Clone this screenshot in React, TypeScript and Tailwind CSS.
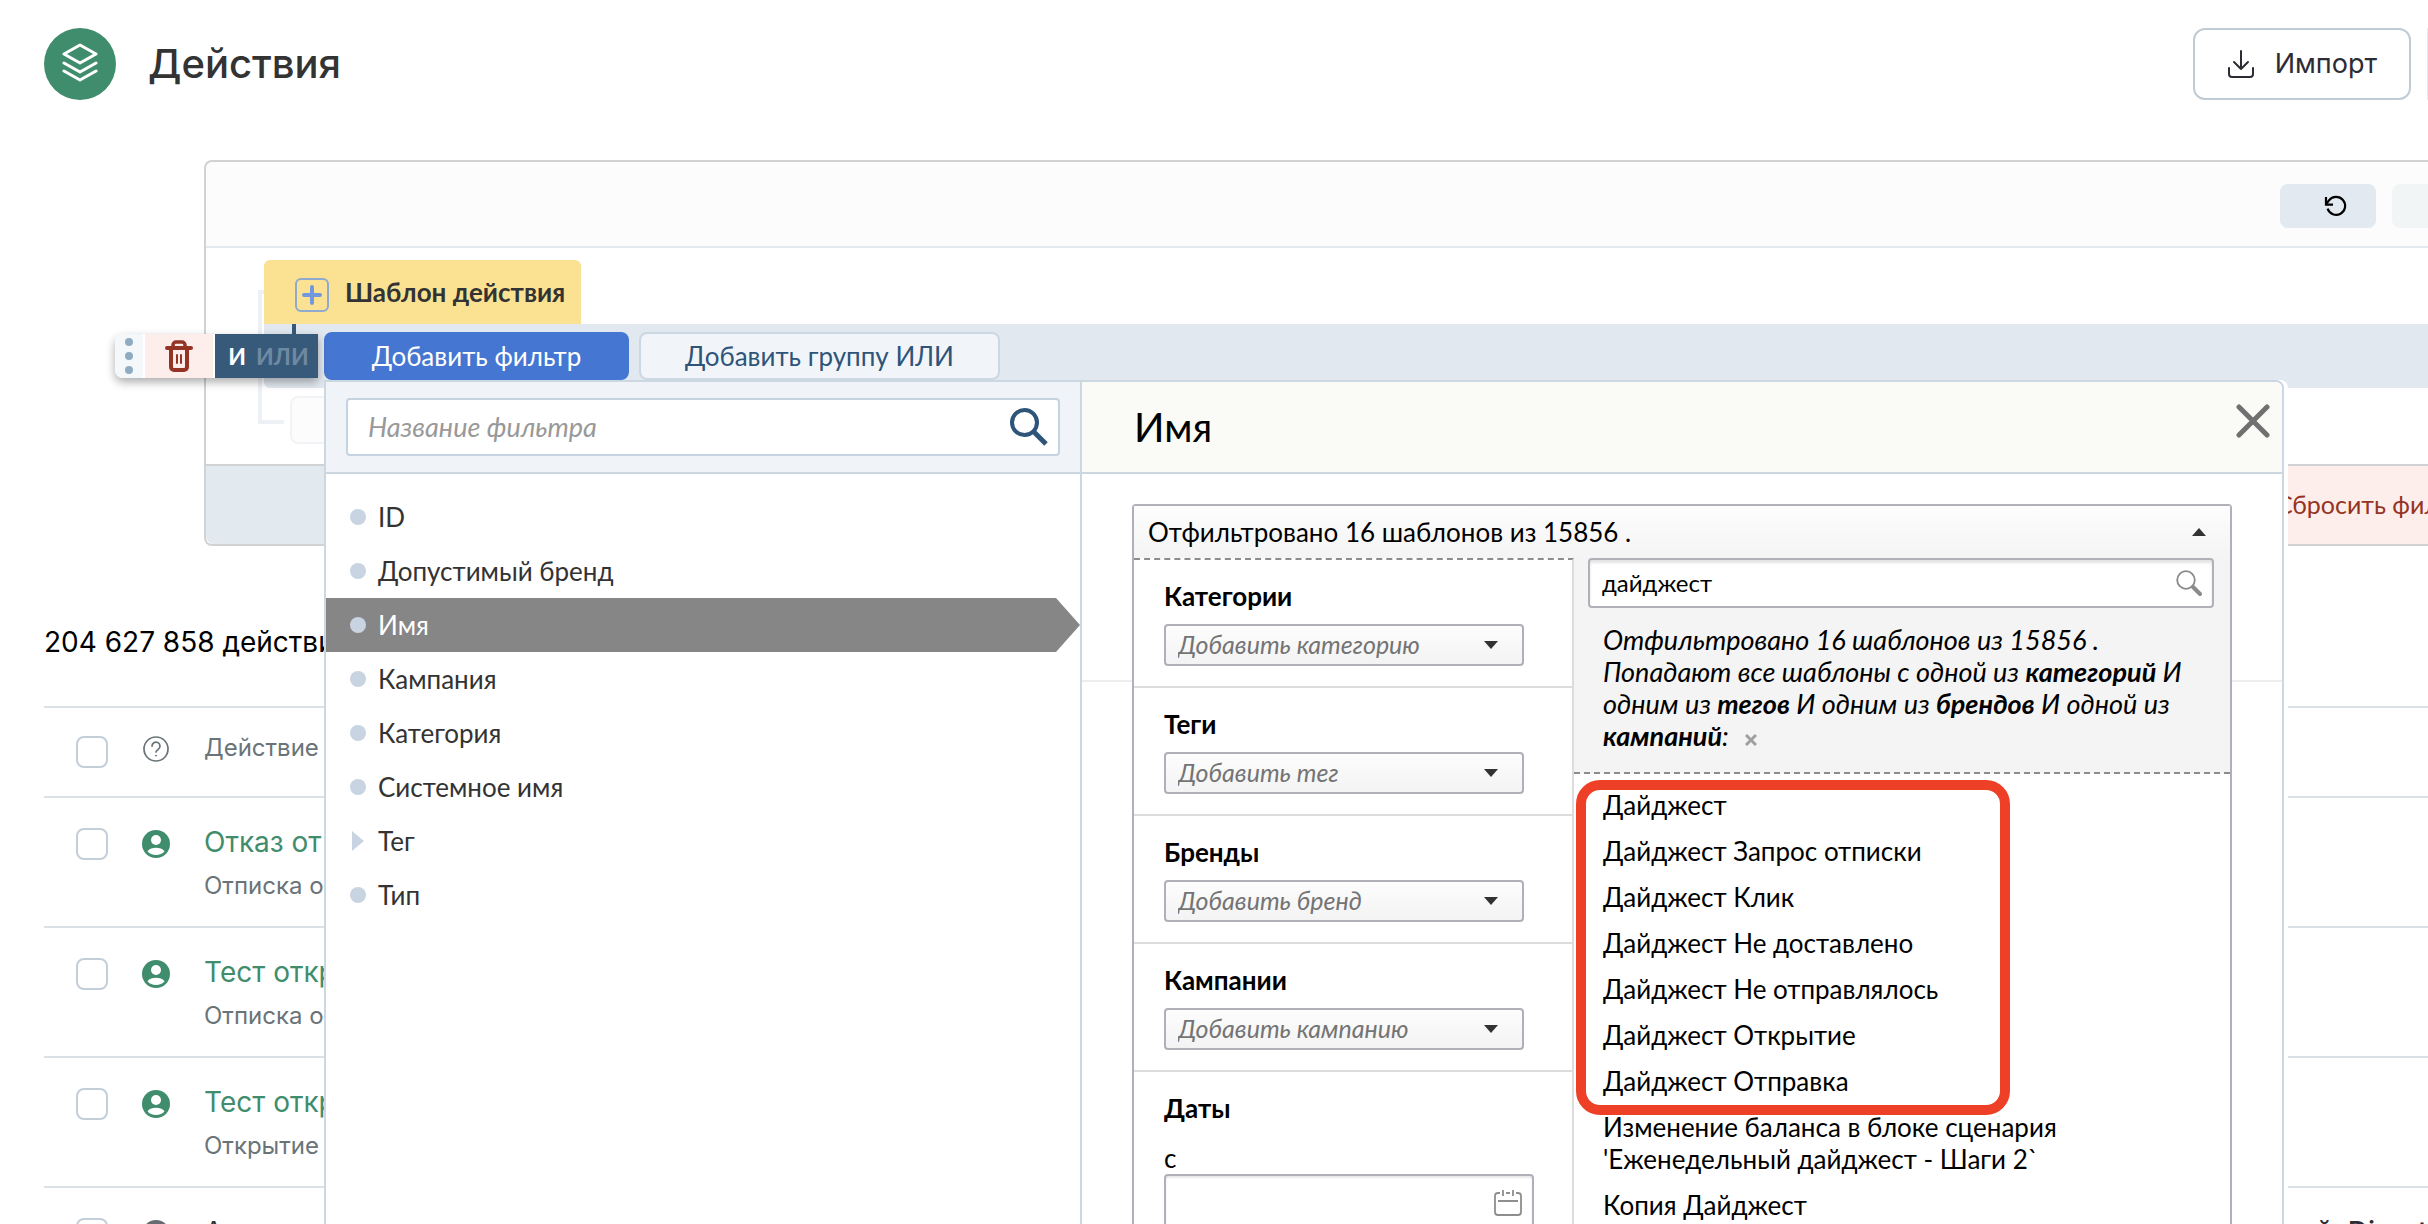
import React from "react";

const filterFields = [
  { name: "ID" },
  { name: "Допустимый бренд" },
  { name: "Имя", selected: true },
  { name: "Кампания" },
  { name: "Категория" },
  { name: "Системное имя" },
  { name: "Тег", nested: true },
  { name: "Тип" },
];

const facets = [
  { id: "categories", title: "Категории", prompt: "Добавить категорию" },
  { id: "tags", title: "Теги", prompt: "Добавить тег" },
  { id: "brands", title: "Бренды", prompt: "Добавить бренд" },
  { id: "campaigns", title: "Кампании", prompt: "Добавить кампанию" },
];

const templates = [
  "Дайджест",
  "Дайджест Запрос отписки",
  "Дайджест Клик",
  "Дайджест Не доставлено",
  "Дайджест Не отправлялось",
  "Дайджест Открытие",
  "Дайджест Отправка",
  "Изменение баланса в блоке сценария 'Еженедельный дайджест - Шаги 2`",
  "Копия Дайджест",
];

const rows = [
  { title: "Отказ от", note: "Отписка о", detail: "" },
  { title: "Тест откр", note: "Отписка о", detail: "" },
  { title: "Тест откр", note: "Открытие", detail: "" },
  { title: "А", note: "", detail: "й\u00a0\u00a0Direct", muted: true },
];

function LayersIcon() {
  return (
    <svg viewBox="0 0 36 42" className="h-[42px] w-9" fill="none" stroke="currentColor" strokeWidth="3" strokeLinejoin="round" strokeLinecap="round">
      <path d="M18 2 34 11 18 20 2 11Z" />
      <path d="M2 20 18 29 34 20" />
      <path d="M2 28 18 37 34 28" />
    </svg>
  );
}

function ImportIcon() {
  return (
    <svg viewBox="0 0 28 28" className="h-7 w-7" fill="none" stroke="currentColor" strokeWidth="2" strokeLinejoin="round" strokeLinecap="round">
      <path d="M14 1V19M7 12l7 7 7-7" />
      <path d="M2 18v6a3 3 0 0 0 3 3h18a3 3 0 0 0 3-3v-6" />
    </svg>
  );
}

function UndoIcon() {
  return (
    <svg viewBox="0 0 24 22" className="h-[22px] w-6" fill="none" stroke="currentColor" strokeWidth="2.2">
      <path d="M3.6 13.6A9 9 0 1 0 5 5.4L2.2 9" />
      <path d="M2 2v7.6h7" />
    </svg>
  );
}

function TrashIcon() {
  return (
    <svg viewBox="0 0 28 32" className="h-8 w-7" fill="none" stroke="currentColor" strokeLinecap="round">
      <path d="M6 9v18a3 3 0 0 0 3 3h10a3 3 0 0 0 3-3V9" strokeWidth="4" />
      <path d="M2 8h24" strokeWidth="4" />
      <path d="M8 7V5a3 3 0 0 1 3-3h6a3 3 0 0 1 3 3v2" strokeWidth="3.5" />
      <path d="M12 15v8M16 15v8" strokeWidth="2" />
    </svg>
  );
}

function SearchIcon() {
  return (
    <svg viewBox="0 0 38 38" className="h-[38px] w-[38px]" fill="none" stroke="currentColor">
      <circle cx="14.5" cy="14.5" r="12.5" strokeWidth="4" />
      <path d="M24 24 36 36" strokeWidth="5" />
    </svg>
  );
}

function LensIcon() {
  return (
    <svg viewBox="0 0 26 26" className="h-[26px] w-[26px]" fill="none" stroke="currentColor">
      <circle cx="10" cy="10" r="8.8" strokeWidth="1.8" />
      <path d="M17 17 24 24" strokeWidth="4" strokeLinecap="round" />
    </svg>
  );
}

function CloseIcon() {
  return (
    <svg viewBox="0 0 34 34" className="h-[34px] w-[34px]" stroke="currentColor" strokeWidth="5" strokeLinecap="round">
      <path d="M3 3 31 31M31 3 3 31" />
    </svg>
  );
}

function QuestionIcon() {
  return (
    <svg viewBox="0 0 26 26" className="h-[26px] w-[26px]" fill="none" stroke="currentColor" strokeWidth="1.7" strokeLinecap="round">
      <circle cx="13" cy="13" r="12" />
      <path d="M9 10.2a4 4 0 1 1 6.2 3.2c-1.4.9-2.2 1.4-2.2 2.6" />
      <circle cx="13" cy="19.6" r="0.6" fill="currentColor" strokeWidth="0.8" />
    </svg>
  );
}

function UserIcon() {
  return (
    <svg viewBox="0 0 28 28" className="h-7 w-7">
      <circle cx="14" cy="14" r="14" fill="currentColor" />
      <circle cx="14" cy="10" r="5" fill="#fff" />
      <path d="M5.5 21.2C7.4 18.7 10.6 17.8 14 17.8s6.6.9 8.500 3.400C20.600 23.700 17.500 25 14 25s-6.600-1.300-8.500-3.800Z" fill="#fff" />
    </svg>
  );
}

function CalendarIcon() {
  return (
    <svg viewBox="0 0 28 26" className="h-[26px] w-7" fill="none" stroke="currentColor" strokeWidth="1.8">
      <path d="M6 3H4a3 3 0 0 0-3 3v16a3 3 0 0 0 3 3h20a3 3 0 0 0 3-3V6a3 3 0 0 0-3-3h-2M12 3h4" />
      <path d="M9 0v6M19 0v6M4 11h20" />
    </svg>
  );
}

function Checkbox({ label }: { label: string }) {
  return (
    <input
      type="checkbox"
      aria-label={label}
      className="block h-8 w-8 appearance-none rounded-lg border-2 border-[#c3ced8] bg-white"
    />
  );
}

function Header() {
  return (
    <header className="flex items-center justify-between pt-7 pl-11">
      <div className="flex items-center gap-8">
        <span className="flex h-[72px] w-[72px] items-center justify-center rounded-full bg-[#3f8d6c] text-white">
          <LayersIcon />
        </span>
        <h1 className="text-[40px] leading-[48px] font-medium text-[#333]">Действия</h1>
      </div>
      <div className="flex gap-4">
        <button type="button" className="flex h-[72px] items-center gap-5 rounded-xl border-2 border-[#c0ccd5] bg-white px-8 text-[27px] text-[#2d2b33]">
          <ImportIcon />
          Импорт
        </button>
        <button type="button" aria-label="Ещё" className="h-[72px] w-px border-l border-[#e4e9ed]" />
      </div>
    </header>
  );
}

function FieldPicker() {
  return (
    <div className="border-r-2 border-[#cbd7e1]">
      <div className="border-b-2 border-[#cbd7e1] bg-[#f0f4f8] px-5 py-4">
        <label className="flex h-[58px] items-center rounded border-2 border-[#c5d2df] bg-white pr-[10px] pl-5 text-[#2f5479]">
          <input
            type="search"
            aria-label="Название фильтра"
            placeholder="Название фильтра"
            className="min-w-0 flex-1 text-[27px] outline-none placeholder:text-[#999] placeholder:italic"
          />
          <SearchIcon />
        </label>
      </div>
      <ul className="pt-4">
        {filterFields.map((f) => (
          <li key={f.name}>
            <button
              type="button"
              className={
                f.selected
                  ? "flex h-[54px] w-full items-center gap-3 bg-[#868686] pl-6 text-[26px] text-white [clip-path:polygon(0_0,calc(100%-24px)_0,100%_50%,calc(100%-24px)_100%,0_100%)]"
                  : "flex h-[54px] w-full items-center gap-3 pl-6 text-[26px] text-[#333]"
              }
            >
              {f.nested ? (
                <span className="ml-0.5 h-5 w-3.5 bg-[#c8d4e1] [clip-path:polygon(0_0,85%_50%,0_100%)]" />
              ) : (
                <span className="h-4 w-4 rounded-full bg-[#c8d4e1]" />
              )}
              {f.name}
            </button>
          </li>
        ))}
      </ul>
    </div>
  );
}

function Facets() {
  return (
    <div className="border-t-2 border-r-2 border-t-[#8c8c8c] border-r-[#dcdcdc] [border-top-style:dashed]">
      {facets.map((f) => (
        <div key={f.id} className="border-b-2 border-[#dcdcdc] px-[30px] py-5">
          <label htmlFor={f.id} className="block text-[26px] leading-8 font-bold text-black">
            {f.title}
          </label>
          <div className="relative mt-3 w-[360px]">
            <select
              id={f.id}
              className="h-[42px] w-full appearance-none rounded border-2 border-[#b0b0b8] bg-linear-to-b from-[#fdfdfd] to-[#f3f3f3] pb-0.5 pl-3 text-[25px] leading-8 text-[#747474] italic"
            >
              <option>{f.prompt}</option>
            </select>
            <span className="pointer-events-none absolute top-[17px] right-[26px] h-2 w-3.5 bg-[#333] [clip-path:polygon(0_0,100%_0,50%_100%)]" />
          </div>
        </div>
      ))}
      <div className="px-[30px] py-5 text-[26px] leading-8 text-black">
        <p className="font-bold">Даты</p>
        <label htmlFor="date-from" className="mt-[18px] block">
          с
        </label>
        <div className="relative w-[370px] text-[#8e8e8e]">
          <input
            id="date-from"
            type="text"
            className="block h-14 w-full rounded border-2 border-[#b0b0b8] bg-white pl-3 shadow-[inset_0_2px_2px_#e8e8e8]"
          />
          <span className="pointer-events-none absolute top-4 right-3">
            <CalendarIcon />
          </span>
        </div>
      </div>
    </div>
  );
}

function TemplateResults() {
  return (
    <div className="min-w-0 text-[26px] leading-8 text-black">
      <div className="border-b-2 border-dashed border-[#8c8c8c] bg-[#f4f4f4] pb-5">
        <label className="mr-4 ml-3.5 flex h-[50px] items-center rounded border-2 border-[#b0b0b8] bg-white pr-2.5 pl-3 text-[#8a8a8a] shadow-[inset_0_3px_3px_#e4e4e4]">
          <input
            type="text"
            aria-label="Поиск шаблона"
            defaultValue="дайджест"
            className="min-w-0 flex-1 bg-transparent text-2xl text-black outline-none"
          />
          <LensIcon />
        </label>
        <p className="mt-4 mr-4 ml-[29px] text-[27px] leading-8 italic">
          Отфильтровано 16 шаблонов из 15856 .<br />
          Попадают все шаблоны с одной из <b>категорий</b> И одним из <b>тегов</b> И одним из <b>брендов</b> И одной из{" "}
          <b>кампаний</b>:
          <button type="button" aria-label="Очистить" className="ml-4 text-[#a0a0a0]">
            <svg viewBox="0 0 12 12" className="h-3 w-3" stroke="currentColor" strokeWidth="3">
              <path d="M1 1 11 11M11 1 1 11" />
            </svg>
          </button>
        </p>
      </div>
      <div className="relative pt-2">
        <ul>
          {templates.map((t) => (
            <li key={t} className="mr-4 ml-[29px] py-[7px]">
              {t}
            </li>
          ))}
        </ul>
        <div className="pointer-events-none absolute top-1.5 left-0.5 h-[335px] w-[434px] rounded-3xl border-10 border-[#ed4026]" />
      </div>
    </div>
  );
}

function FilterDropdown() {
  return (
    <div className="absolute top-14 right-36 left-[60px] z-20 grid grid-cols-[756px_1fr] rounded-tr-lg border-2 border-[#cbd7e1] bg-white shadow-[4px_0_0_#fff]">
      <FieldPicker />
      <div className="min-w-0">
        <div className="flex h-[92px] items-center justify-between rounded-tr-lg border-b-2 border-[#cbd7e1] bg-[#fafbf6] pr-3 pl-[52px]">
          <h2 className="text-[40px] text-black">Имя</h2>
          <button type="button" aria-label="Закрыть" className="mb-3 text-[#707070]">
            <CloseIcon />
          </button>
        </div>
        <div className="relative px-[50px] pt-[30px]">
          <div className="absolute top-[206px] right-0 left-0 h-0.5 bg-[#eee]" />
          <div className="relative rounded-t border-2 border-[#b0b0b8] bg-white">
            <button
              type="button"
              className="flex h-[52px] w-full items-center justify-between bg-linear-to-b from-[#fdfdfd] to-[#f4f4f4] pr-6 pl-3.5 text-[26px] text-black"
            >
              Отфильтровано 16 шаблонов из 15856 .
              <span className="h-2 w-3.5 bg-[#333] [clip-path:polygon(50%_0,100%_100%,0_100%)]" />
            </button>
            <div className="grid grid-cols-[440px_1fr]">
              <Facets />
              <TemplateResults />
            </div>
          </div>
        </div>
      </div>
    </div>
  );
}

function GroupControls() {
  return (
    <div className="absolute top-2.5 -left-[149px] z-10 flex h-11 w-[203px] items-stretch gap-0.5 overflow-hidden rounded-l-lg bg-white shadow-[0_4px_10px_#0005]">
      <button type="button" aria-label="Переместить" className="flex w-7 flex-col items-center justify-center gap-1.5 bg-[#f5f8fb]">
        <span className="h-2 w-2 rounded-full bg-[#90abc0]" />
        <span className="h-2 w-2 rounded-full bg-[#90abc0]" />
        <span className="h-2 w-2 rounded-full bg-[#90abc0]" />
      </button>
      <button type="button" aria-label="Удалить" className="flex w-[68px] items-center justify-center bg-[#fdeeeb] text-[#943424]">
        <TrashIcon />
      </button>
      <button type="button" className="flex flex-1 items-center justify-center gap-2.5 bg-[#375a7a] pl-1 text-[23px] font-bold text-white">
        И <span className="text-[#6f89a1]">ИЛИ</span>
      </button>
    </div>
  );
}

function FilterBuilder() {
  return (
    <section className="mt-[60px] ml-[204px] rounded-tl-lg rounded-bl-lg border-y-2 border-l-2 border-[#d0d2d3] font-[Lato,sans-serif]">
      <div className="flex h-[86px] items-center justify-end gap-4 rounded-tl-lg border-b-2 border-[#e3e9ee] bg-[#fcfcfc] pt-1">
        <button type="button" aria-label="Отменить" className="flex h-11 w-24 items-center justify-center rounded-lg bg-[#e2e9f0] pl-4 text-black">
          <UndoIcon />
        </button>
        <button type="button" aria-label="Повторить" className="h-11 w-9 rounded-l-lg bg-[#f2f5f6]" />
      </div>
      <div className="relative pt-3 pb-5 pl-[58px]">
        <div className="absolute top-[42px] left-[52px] h-[134px] w-[26px] border-y-4 border-l-4 border-[#edf1f6]" />
        <div className="relative flex h-16 w-[317px] items-center rounded-t-md bg-[#fae292] pl-[31px]">
          <button type="button" aria-label="Развернуть" className="mt-1.5 flex h-[34px] w-[34px] items-center justify-center rounded-md border-2 border-[#8fa9cf] text-[#7398de]">
            <svg viewBox="0 0 20 20" className="h-5 w-5" stroke="currentColor" strokeWidth="4" strokeLinecap="round">
              <path d="M10 2v16M2 10h16" />
            </svg>
          </button>
          <span className="ml-4 text-[26px] font-bold text-[#333]">Шаблон действия</span>
        </div>
        <div className="relative flex h-16 gap-2.5 rounded-bl-md bg-[#e1e8ef] pt-2 pl-[60px]">
          <div className="absolute top-0 left-7 h-2.5 w-1 bg-[#375a7a]" />
          <GroupControls />
          <button type="button" className="h-12 w-[305px] rounded-lg bg-[#4576d1] text-[26px] text-white">
            Добавить фильтр
          </button>
          <button type="button" className="h-12 w-[361px] rounded-lg border-2 border-[#cbd7e1] bg-[#f1f4f8] text-[26px] text-[#2f5479]">
            Добавить группу ИЛИ
          </button>
          <FilterDropdown />
        </div>
        <button type="button" aria-label="Добавить условие" className="mt-2 ml-[26px] block h-12 w-[300px] rounded-lg border-2 border-[#f1f3f6] bg-[#fcfcfd]" />
      </div>
      <div className="flex h-20 justify-end rounded-bl-lg border-t-2 border-[#d0d2d3] bg-[#e2e9ef]">
        <button type="button" className="w-[200px] bg-[#fdeeeb] pl-12 text-left text-[25px] whitespace-nowrap text-[#943424]">
          Сбросить фильтр
        </button>
      </div>
    </section>
  );
}

function ActionsTable() {
  return (
    <section className="mt-20 pl-11">
      <p className="text-[28px] leading-8 text-black">204 627 858 действий</p>
      <table className="mt-12 w-full table-fixed border-separate border-spacing-0 text-left">
        <thead>
          <tr className="h-[90px] align-top text-2xl leading-8 text-[#6a7478]">
            <th className="w-[96px] border-t-2 border-[#dbe2e5] pt-7 pl-8 font-normal">
              <Checkbox label="Выбрать все" />
            </th>
            <th className="w-16 border-t-2 border-[#dbe2e5] pt-7 pl-[3px] font-normal">
              <QuestionIcon />
            </th>
            <th className="border-t-2 border-[#dbe2e5] pt-6 font-normal">Действие</th>
            <th className="w-28 border-t-2 border-[#dbe2e5]" />
          </tr>
        </thead>
        <tbody>
          {rows.map((r, i) => (
            <tr key={i} className="h-[130px] align-top">
              <td className="border-t-2 border-[#dbe2e5] pt-[30px] pl-8">
                <Checkbox label={r.title} />
              </td>
              <td className={r.muted ? "border-t-2 border-[#dbe2e5] pt-8 pl-0.5 text-[#666c72]" : "border-t-2 border-[#dbe2e5] pt-8 pl-0.5 text-[#3f8d6c]"}>
                <UserIcon />
              </td>
              <td className="border-t-2 border-[#dbe2e5] pt-7">
                <a href="#action" className={r.muted ? "block text-[28px] leading-8 text-[#333]" : "block text-[28px] leading-8 text-[#3f8d6c]"}>
                  {r.title}
                </a>
                <p className="mt-3 text-2xl leading-8 text-[#6a7478]">{r.note}</p>
              </td>
              <td className="border-t-2 border-[#dbe2e5] pt-7 text-[28px] leading-8 font-medium whitespace-nowrap text-[#2d2b33]">{r.detail}</td>
            </tr>
          ))}
        </tbody>
      </table>
    </section>
  );
}

export default function App() {
  return (
    <main className="h-screen overflow-hidden bg-white font-[Inter,sans-serif]">
      <Header />
      <FilterBuilder />
      <ActionsTable />
    </main>
  );
}
